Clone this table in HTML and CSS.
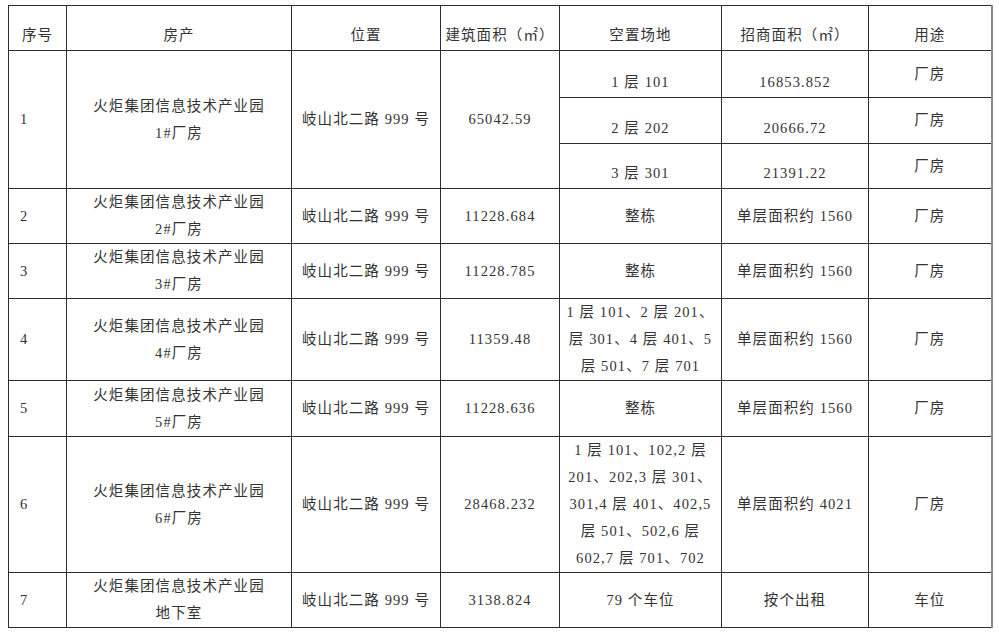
FILE: index.html
```html
<!DOCTYPE html>
<html lang="zh-CN">
<head>
<meta charset="utf-8">
<title>招商房源表</title>
<link rel="stylesheet" href="styles.css">
</head>
<body>
<table class="sheet">
  <colgroup>
    <col class="c1"><col class="c2"><col class="c3"><col class="c4"><col class="c5"><col class="c6"><col class="c7">
  </colgroup>
  <thead>
    <tr class="h-head">
      <th>序号</th><th>房产</th><th>位置</th><th>建筑面积（㎡）</th><th>空置场地</th><th>招商面积（㎡）</th><th>用途</th>
    </tr>
  </thead>
  <tbody>
    <tr class="h-s1">
      <td class="no" rowspan="3">1</td>
      <td rowspan="3">火炬集团信息技术产业园<br>1#厂房</td>
      <td rowspan="3">岐山北二路 999 号</td>
      <td rowspan="3">65042.59</td>
      <td class="b">1 层 101</td>
      <td class="b">16853.852</td>
      <td>厂房</td>
    </tr>
    <tr class="h-s2">
      <td class="b">2 层 202</td>
      <td class="b">20666.72</td>
      <td>厂房</td>
    </tr>
    <tr class="h-s3">
      <td class="b">3 层 301</td>
      <td class="b">21391.22</td>
      <td>厂房</td>
    </tr>
    <tr class="h-2">
      <td class="no">2</td>
      <td>火炬集团信息技术产业园<br>2#厂房</td>
      <td>岐山北二路 999 号</td>
      <td>11228.684</td>
      <td>整栋</td>
      <td>单层面积约 1560</td>
      <td>厂房</td>
    </tr>
    <tr class="h-2">
      <td class="no">3</td>
      <td>火炬集团信息技术产业园<br>3#厂房</td>
      <td>岐山北二路 999 号</td>
      <td>11228.785</td>
      <td>整栋</td>
      <td>单层面积约 1560</td>
      <td>厂房</td>
    </tr>
    <tr class="h-3">
      <td class="no">4</td>
      <td>火炬集团信息技术产业园<br>4#厂房</td>
      <td>岐山北二路 999 号</td>
      <td>11359.48</td>
      <td>1 层 101、2 层 201、<br>层 301、4 层 401、5<br>层 501、7 层 701</td>
      <td>单层面积约 1560</td>
      <td>厂房</td>
    </tr>
    <tr class="h-2b">
      <td class="no">5</td>
      <td>火炬集团信息技术产业园<br>5#厂房</td>
      <td>岐山北二路 999 号</td>
      <td>11228.636</td>
      <td>整栋</td>
      <td>单层面积约 1560</td>
      <td>厂房</td>
    </tr>
    <tr class="h-5">
      <td class="no">6</td>
      <td>火炬集团信息技术产业园<br>6#厂房</td>
      <td>岐山北二路 999 号</td>
      <td>28468.232</td>
      <td>1 层 101、102,2 层<br>201、202,3 层 301、<br>301,4 层 401、402,5<br>层 501、502,6 层<br>602,7 层 701、702</td>
      <td>单层面积约 4021</td>
      <td>厂房</td>
    </tr>
    <tr class="h-2">
      <td class="no">7</td>
      <td>火炬集团信息技术产业园<br>地下室</td>
      <td>岐山北二路 999 号</td>
      <td>3138.824</td>
      <td>79 个车位</td>
      <td>按个出租</td>
      <td>车位</td>
    </tr>
  </tbody>
</table>
</body>
</html>
```

FILE: styles.css
```css
html, body {
  background: #ffffff;
}

body {
  margin: 5px 0 0 8px;
  font-family: "Liberation Serif", "Noto Sans CJK SC", serif;
  font-size: 14.5px;
  letter-spacing: 1.1px;
  color: #333333;
}

.sheet {
  border-collapse: collapse;
  table-layout: fixed;
  width: 984px;
  border-right: 2px solid #8a8a8a;
}

.c1 { width: 58px; }
.c2 { width: 225px; }
.c3 { width: 149px; }
.c4 { width: 119px; }
.c5 { width: 162px; }
.c6 { width: 147px; }
.c7 { width: 123px; }

.sheet th,
.sheet td {
  border: 1px solid #2e2e2e;
  padding: 0;
  line-height: 27px;
  text-align: center;
  vertical-align: middle;
  font-weight: normal;
  white-space: nowrap;
}

.sheet th {
  vertical-align: bottom;
  padding-bottom: 1px;
}

.sheet th:last-child,
.sheet td:last-child {
  border-right: 2px solid #8a8a8a;
}

.sheet td.no {
  text-align: left;
  padding-left: 11px;
}

.sheet td.b {
  vertical-align: bottom;
  padding-bottom: 1px;
}

.h-head { height: 45px; }
.h-s1 { height: 47px; }
.h-s2 { height: 46px; }
.h-s3 { height: 45px; }
.h-2 { height: 55px; }
.h-2b { height: 56px; }
.h-3 { height: 82px; }
.h-5 { height: 136px; }
```
